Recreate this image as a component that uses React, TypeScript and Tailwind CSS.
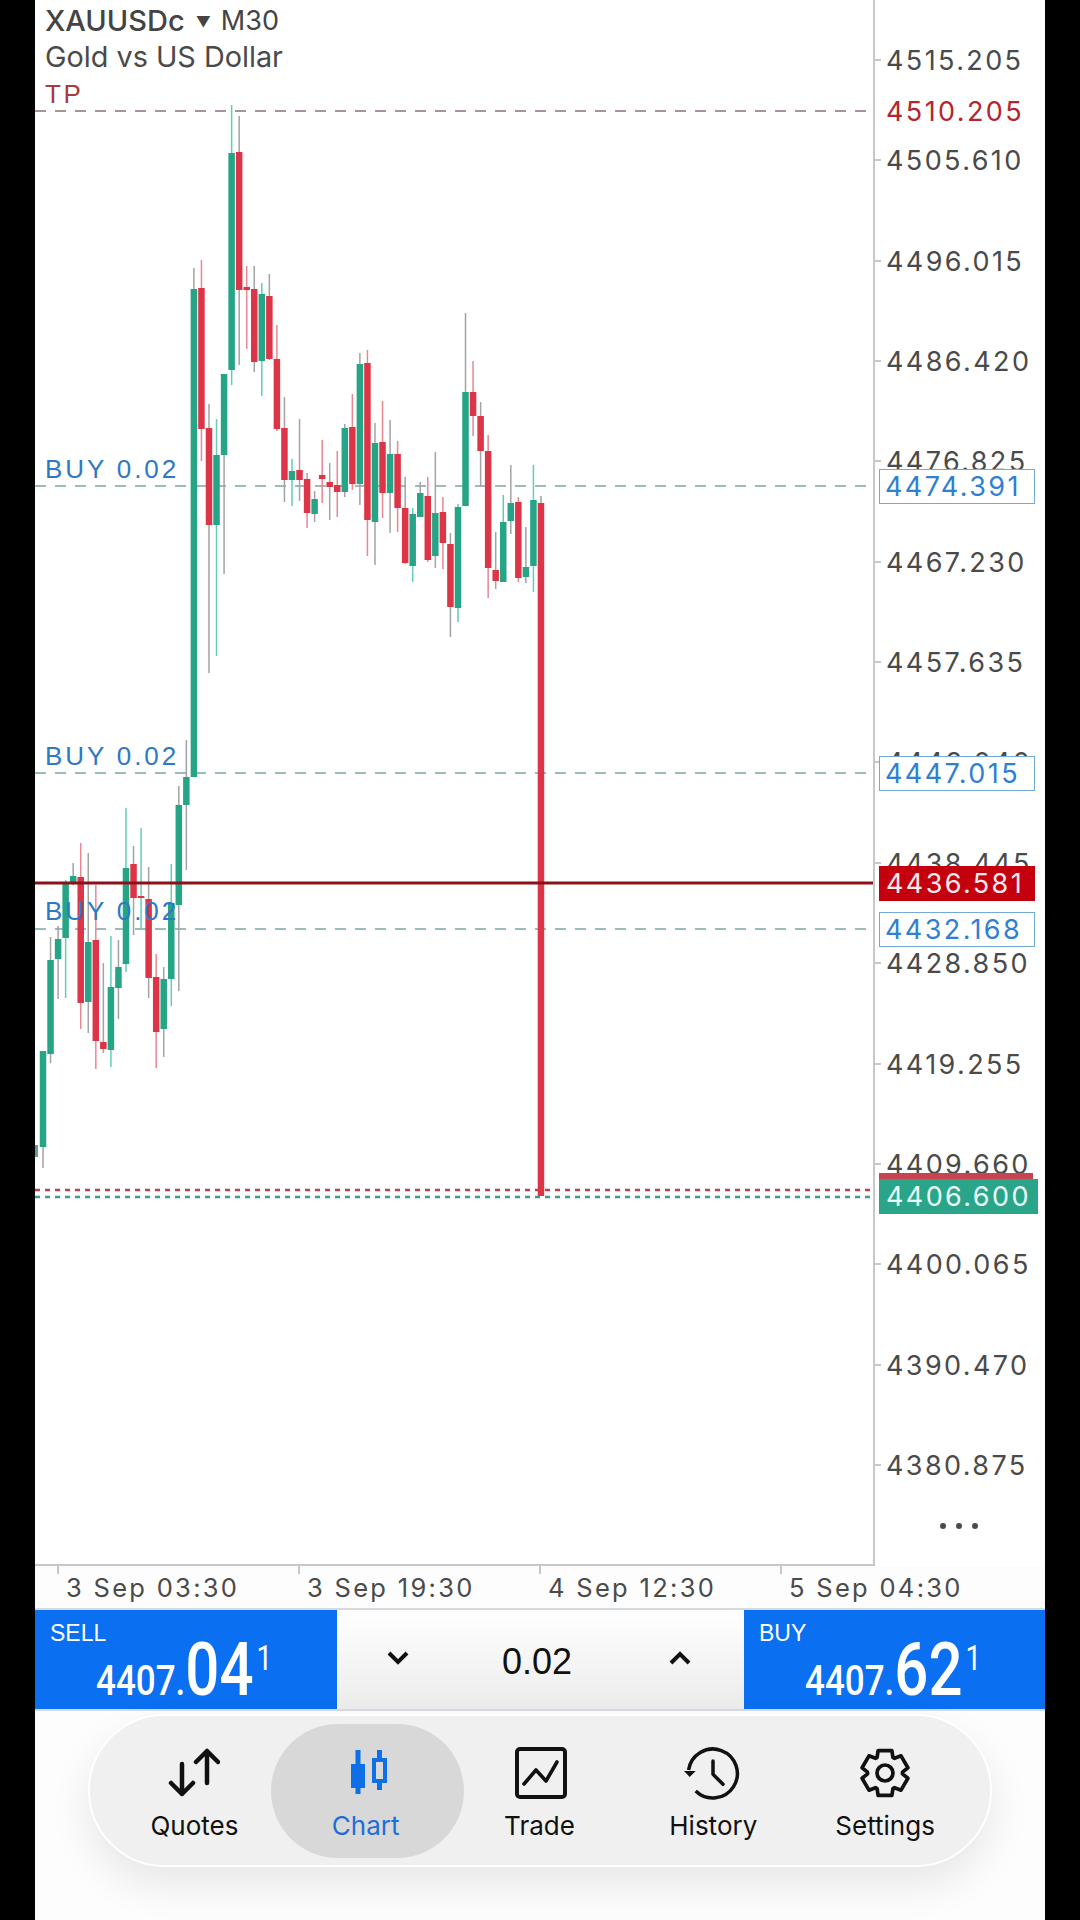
// top, bottom, wick top, wick bottom, body colour, wick colour
type Candle = [number, number, number, number, 'g' | 'r', 'a' | 't' | 'p'];

const candles: Candle[] = [
  [1051, 1147, 1051, 1168, 'g', 'a'],
  [960, 1054, 937, 1063, 'g', 'a'],
  [939, 959, 926, 999, 'g', 'a'],
  [883, 938, 880, 998, 'g', 't'],
  [876, 882, 863, 885, 'g', 'a'],
  [877, 1003, 843, 1029, 'r', 'p'],
  [942, 1002, 853, 1033, 'g', 'a'],
  [940, 1041, 885, 1069, 'r', 'p'],
  [1042, 1049, 963, 1053, 'r', 'a'],
  [987, 1050, 936, 1067, 'g', 't'],
  [967, 988, 940, 1019, 'g', 'a'],
  [868, 964, 808, 972, 'g', 't'],
  [864, 898, 846, 935, 'r', 'a'],
  [896, 898, 828, 930, 'r', 't'],
  [899, 978, 867, 998, 'r', 'a'],
  [977, 1032, 954, 1068, 'r', 'p'],
  [979, 1029, 967, 1057, 'g', 'a'],
  [903, 979, 864, 1006, 'g', 't'],
  [805, 905, 786, 991, 'g', 'a'],
  [777, 805, 740, 870, 'g', 'a'],
  [289, 777, 268, 777, 'g', 'a'],
  [288, 429, 260, 461, 'r', 'p'],
  [428, 525, 404, 673, 'r', 'a'],
  [455, 525, 419, 656, 'g', 't'],
  [374, 455, 374, 574, 'g', 'a'],
  [153, 370, 105, 385, 'g', 't'],
  [152, 290, 116, 365, 'r', 'a'],
  [287, 290, 266, 349, 'r', 'p'],
  [289, 362, 266, 372, 'r', 'a'],
  [294, 361, 283, 396, 'g', 't'],
  [296, 359, 274, 360, 'r', 'a'],
  [359, 429, 325, 431, 'r', 'p'],
  [428, 480, 397, 502, 'r', 'a'],
  [471, 480, 459, 506, 'g', 't'],
  [470, 480, 419, 501, 'r', 'a'],
  [479, 513, 473, 528, 'r', 'p'],
  [499, 514, 491, 522, 'g', 'a'],
  [475, 479, 440, 503, 'r', 'p'],
  [482, 487, 463, 520, 'r', 'a'],
  [485, 492, 451, 517, 'r', 'p'],
  [428, 492, 424, 497, 'g', 'a'],
  [427, 484, 394, 490, 'r', 'p'],
  [364, 484, 353, 505, 'g', 'a'],
  [363, 520, 350, 556, 'r', 'p'],
  [443, 522, 423, 565, 'g', 'a'],
  [442, 493, 401, 518, 'r', 'p'],
  [454, 493, 420, 533, 'g', 'a'],
  [454, 508, 441, 532, 'r', 'p'],
  [508, 563, 477, 564, 'r', 'a'],
  [514, 566, 508, 582, 'g', 't'],
  [493, 517, 482, 517, 'g', 'a'],
  [496, 560, 477, 562, 'r', 'p'],
  [513, 556, 452, 568, 'g', 'a'],
  [512, 543, 497, 569, 'r', 'p'],
  [544, 607, 533, 637, 'r', 'a'],
  [507, 608, 504, 622, 'g', 't'],
  [392, 506, 313, 506, 'g', 'a'],
  [392, 416, 361, 436, 'r', 'p'],
  [416, 451, 402, 487, 'r', 'a'],
  [451, 568, 435, 598, 'r', 'p'],
  [570, 581, 532, 589, 'r', 'a'],
  [522, 582, 495, 582, 'g', 't'],
  [503, 521, 465, 534, 'g', 'a'],
  [502, 578, 497, 582, 'r', 'p'],
  [567, 577, 527, 583, 'g', 'a'],
  [500, 566, 465, 592, 'g', 't'],
  [503, 1196, 496, 1196, 'r', 'a'],
];

const bodyColor = { g: '#26a586', r: '#dc3547' };
const wickColor = { a: '#a3a3a3', t: '#63cdb8', p: '#ea8792' };

const prices = ['4515.205', '4505.610', '4496.015', '4486.420', '4476.825', '4467.230', '4457.635', '4448.040', '4438.445', '4428.850', '4419.255', '4409.660', '4400.065', '4390.470', '4380.875'];

const orderBoxes = [
  { y: 486, label: '4474.391' },
  { y: 773, label: '4447.015' },
  { y: 929, label: '4432.168' },
];

function ChartSvg() {
  return (
    <svg width="838" height="1564" viewBox="35 0 838 1564" className="block">
      <line x1="35" x2="873" y1="111" y2="111" stroke="#8d7272" strokeWidth="1.5" strokeDasharray="11 9" />
      {orderBoxes.map((o) => (
        <line key={o.y} x1="35" x2="873" y1={o.y} y2={o.y} stroke="#7ba7a8" strokeWidth="1.5" strokeDasharray="11 9" />
      ))}
      <line x1="35" x2="873" y1="1190" y2="1190" stroke="#c0404e" strokeWidth="2.5" strokeDasharray="5 5" />
      <line x1="35" x2="873" y1="1197" y2="1197" stroke="#3f9c88" strokeWidth="2.5" strokeDasharray="5 5" />
      <rect x="35" y="1145" width="3" height="12" fill="#6b9c90" />
      {candles.map((c, i) => {
        const x = 43 + 7.545 * i;
        return (
          <g key={i}>
            <rect x={x - 0.75} y={c[2]} width="1.5" height={c[3] - c[2]} fill={wickColor[c[5]]} />
            <rect x={x - 3.25} y={c[0]} width="6.5" height={c[1] - c[0]} fill={bodyColor[c[4]]} />
          </g>
        );
      })}
      <rect x="35" y="881.5" width="838" height="3" fill="#8c1018" />
    </svg>
  );
}

function PriceAxis() {
  return (
    <div className="relative flex-1 font-['Inter',sans-serif] text-[27px] tracking-[2.4px] text-[#4a4a4a]">
      {prices.map((p, k) => {
        const y = 60 + 100.35 * k;
        return (
          <div key={p}>
            <div className="absolute left-0 h-[2px] w-[6px] bg-[#c8c8c8]" style={{ top: y - 1 }} />
            <div className="absolute left-[11px] leading-[32px]" style={{ top: y - 15 }}>{p}</div>
          </div>
        );
      })}
      <div className="absolute left-[11px] top-[96px] leading-[32px] text-[#b3262c]">4510.205</div>
      {orderBoxes.map((o) => (
        <div
          key={o.y}
          className="absolute left-[4px] h-[35px] w-[156px] border-[1.5px] border-[#72acd6] bg-white pl-[5px] leading-[33px] text-[#2f80d2]"
          style={{ top: o.y - 17 }}
        >
          {o.label}
        </div>
      ))}
      <div className="absolute left-[4px] top-[866px] h-[35px] w-[156px] bg-[#c4000f] pl-[7px] leading-[36px] text-[#fbeaea]">4436.581</div>
      <div className="absolute left-[4px] top-[1173px] h-[6px] w-[154px] bg-[#c8434f]" />
      <div className="absolute left-[4px] top-[1179px] h-[35px] w-[159px] bg-[#2aa58a] pl-[7px] leading-[36px] text-[#eafff8]">4406.600</div>
      <div className="absolute left-[65px] top-[1523px] flex gap-[10px]">
        <span className="h-[6px] w-[6px] rounded-full bg-[#4a4a4a]" />
        <span className="h-[6px] w-[6px] rounded-full bg-[#4a4a4a]" />
        <span className="h-[6px] w-[6px] rounded-full bg-[#4a4a4a]" />
      </div>
    </div>
  );
}

function QuoteButton({ side, whole, big, sup, width }: { side: string; whole: string; big: string; sup: string; width: string }) {
  return (
    <div className={`${width} flex flex-col bg-[#0a6ff0] pl-[15px] pt-[9px] text-white`}>
      <div className="text-[23px] leading-[28px]">{side}</div>
      <div className="ml-[46px] flex h-[60px] origin-bottom scale-y-[1.22] items-start font-['Roboto',sans-serif] font-medium">
        <div className="flex items-baseline">
          <span className="text-[35px] leading-[60px]">{whole}</span>
          <span className="text-[60px] leading-[60px]">{big}</span>
        </div>
        <span className="ml-[3px] mt-[5px] text-[28px] font-normal leading-[32px]">{sup}</span>
      </div>
    </div>
  );
}

function QuotesIcon() {
  return (
    <svg width="52" height="52" viewBox="0 0 52 52" fill="none" stroke="#111" strokeWidth="4.5" strokeLinecap="round" strokeLinejoin="round">
      <path d="M14 17v30M3 36l11 11 11-11" />
      <path d="M39 36V4M28 15L39 4l11 11" />
    </svg>
  );
}

function ChartIcon() {
  return (
    <svg width="52" height="52" viewBox="0 0 52 52" fill="none" stroke="#0f6fe6" strokeWidth="5">
      <path d="M18 3v44M39.500 3v8M39.500 36v7" />
      <rect x="11" y="17" width="14" height="24" fill="#0f6fe6" stroke="none" />
      <rect x="34" y="13" width="11" height="21" strokeWidth="4" />
    </svg>
  );
}

function TradeIcon() {
  return (
    <svg width="52" height="52" viewBox="0 0 52 52" fill="none" stroke="#111" strokeLinejoin="round" strokeLinecap="round" className="ml-[4px]">
      <rect x="2" y="2" width="48" height="48" rx="3" strokeWidth="4" />
      <path d="M9 37l12-14 10 11 11-19" strokeWidth="3.6" />
    </svg>
  );
}

function HistoryIcon() {
  return (
    <svg width="56" height="56" viewBox="0 0 56 56" fill="none" stroke="#111" strokeWidth="3.5" className="overflow-visible">
      <path d="M10.700 46A24.500 24.500 0 1 0 3.600 25" />
      <path d="M-1 26H10.700L4.700 32Z" fill="#111" stroke="none" />
      <path d="M28 16V29.300L38 39.300" strokeLinecap="round" strokeLinejoin="round" />
    </svg>
  );
}

// six tooth gear, points worked out from the tooth angles
function gearPath() {
  const pt = (deg: number, r: number) => {
    const a = ((deg - 90) * Math.PI) / 180;
    return `${(26 + r * Math.cos(a)).toFixed(2)} ${(26 + r * Math.sin(a)).toFixed(2)}`;
  };
  const parts: string[] = [];
  for (let t = 0; t < 6; t++) {
    const th = t * 60;
    parts.push(pt(th - 17, 23.500), pt(th + 17, 23.500), pt(th + 27, 17.500), pt(th + 33, 17.500));
  }
  return `M${parts.join('L')}Z`;
}

function GearIcon() {
  return (
    <svg width="52" height="52" viewBox="0 0 52 52" fill="none" stroke="#111" strokeWidth="3.7" strokeLinejoin="round">
      <path d={gearPath()} />
      <circle cx="26" cy="26" r="8" />
    </svg>
  );
}

const navItems = [
  { label: 'Quotes', icon: <QuotesIcon />, width: 'w-[171px]' },
  { label: 'Chart', icon: <ChartIcon />, width: 'w-[172px]', active: true },
  { label: 'Trade', icon: <TradeIcon />, width: 'w-[176px]' },
  { label: 'History', icon: <HistoryIcon />, width: 'w-[172px]' },
  { label: 'Settings', icon: <GearIcon />, width: 'w-[172px]' },
];

function App() {
  const sans = "font-['Liberation_Sans',sans-serif]";
  const inter = "font-['Inter',sans-serif]";
  return (
    <div className="flex h-[1920px] w-[1080px] justify-center overflow-hidden bg-black">
      <div className={`${sans} flex h-full w-[1010px] flex-col bg-[#fdfdfd]`}>
        {/* Chart + price scale */}
        <div className="flex h-[1566px] bg-white">
          <div className="relative h-full w-[840px] border-r-2 border-b-2 border-[#c8c8c8]">
            <ChartSvg />
            <div className={`${inter} absolute left-[10px] top-0 flex items-center leading-[40px] text-[#444]`}>
              <span className="text-[29px] font-medium">XAUUSDc</span>
              <span className="ml-[11px] mt-[2px] text-[15px]">▼</span>
              <span className="ml-[10px] text-[27px]">M30</span>
            </div>
            <div className={`${inter} absolute left-[10px] top-[38px] text-[28.8px] leading-[38px] text-[#4a4a4a]`}>Gold vs US Dollar</div>
            <div className="absolute left-[10px] top-[78px] text-[26px] leading-[32px] tracking-[2.6px] text-[#a83a40]">TP</div>
            {[453, 740, 895].map((top) => (
              <div key={top} className="absolute left-[10px] text-[26px] leading-[32px] tracking-[2.9px] text-[#2f78c4]" style={{ top }}>BUY 0.02</div>
            ))}
          </div>
          <PriceAxis />
        </div>

        {/* Time scale */}
        <div className={`${inter} flex h-[42px] pl-[22px] text-[25.5px] tracking-[2.3px] text-[#4a4a4a]`}>
          {['3 Sep 03:30', '3 Sep 19:30', '4 Sep 12:30', '5 Sep 04:30'].map((t) => (
            <div key={t} className="relative w-[241px] pl-[9px] leading-[44px]">
              <span className="absolute left-0 top-0 h-[8px] w-[2px] bg-[#c8c8c8]" />
              {t}
            </div>
          ))}
        </div>

        {/* One click trading bar */}
        <div className="flex h-[103px] border-y-2 border-[#d6dbe2]">
          <QuoteButton side="SELL" whole="4407." big="04" sup="1" width="w-[302px]" />
          <div className="flex flex-1 items-center bg-linear-to-b from-white to-[#ececec]">
            <svg width="22" height="14" viewBox="0 0 22 14" fill="none" stroke="#111" strokeWidth="4" className="ml-[50px] mt-[-4px]">
              <path d="M2 2l9 9 9-9" />
            </svg>
            <span className="ml-[93px] mt-[4px] w-[71px] text-[36px] text-[#111]">0.02</span>
            <svg width="22" height="14" viewBox="0 0 22 14" fill="none" stroke="#111" strokeWidth="4" className="ml-[96px] mt-[-4px]">
              <path d="M2 12l9-9 9 9" />
            </svg>
          </div>
          <QuoteButton side="BUY" whole="4407." big="62" sup="1" width="w-[301px]" />
        </div>

        {/* Tab bar */}
        <div className="flex-1 pl-[53px] pt-[3px]">
          <div className="flex h-[153px] w-[904px] rounded-full border-2 border-white bg-[#f0f0f0] px-[19px] shadow-[0_18px_40px_rgba(0,0,0,0.09)]">
            {navItems.map((item) => (
              <div key={item.label} className={`${item.width} relative flex flex-col items-center pt-[31px]`}>
                {item.active && <div className="absolute left-[-9px] top-[8px] h-[134px] w-[193px] rounded-full bg-[#d8d8d8]" />}
                <div className="relative flex h-[52px] w-[60px] items-center justify-center">{item.icon}</div>
                <div className={`${inter} relative mt-[10px] text-[26px] leading-[34px] ${item.active ? 'text-[#1a6fd8]' : 'text-[#111]'}`}>{item.label}</div>
              </div>
            ))}
          </div>
        </div>
      </div>
    </div>
  );
}

export default App;
